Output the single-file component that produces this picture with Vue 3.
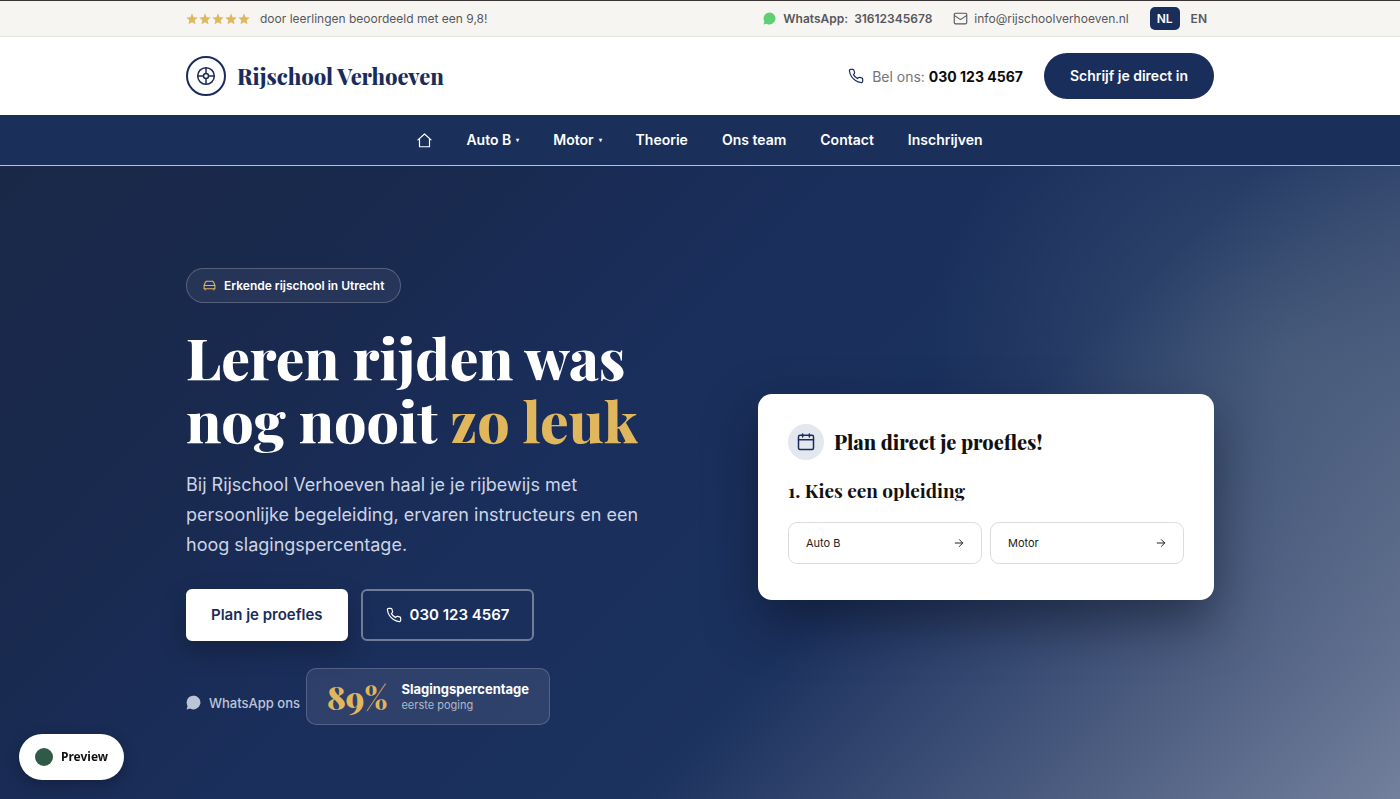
<script setup>
const stars = [0, 1, 2, 3, 4]
const links = [
  { label: 'Auto B', sub: true },
  { label: 'Motor', sub: true },
  { label: 'Theorie' },
  { label: 'Ons team' },
  { label: 'Contact' },
  { label: 'Inschrijven' }
]
const courses = ['Auto B', 'Motor']
</script>

<template>
  <div class="page">
    <div class="topbar">
      <div class="wrap topbar-row">
        <div class="rating">
          <span class="stars">
            <svg v-for="s in stars" :key="s" viewBox="0 0 24 24" width="12" height="12"><path fill="#e0b75c" d="M12 0.5l3.200 7.800 8.300.7-6.300 5.500 1.900 8.200L12 18.300 4.900 22.700l1.900-8.200L.5 9l8.300-.7z" /></svg>
          </span>
          <span>door leerlingen beoordeeld met een 9,8!</span>
        </div>
        <div class="contact">
          <a href="#whatsapp" class="wa"><svg viewBox="0 0 24 24" width="13" height="13"><path fill="#5fcf74" d="M12 1a11 11 0 1 1-5.500 20.500L1 23l1.500-5.500A11 11 0 0 1 12 1z" /></svg>WhatsApp:&nbsp; 31612345678</a>
          <a href="#mail" class="mail"><svg viewBox="0 0 24 24" width="15" height="15" fill="none" stroke="currentColor" stroke-width="1.800" stroke-linejoin="round"><rect x="2" y="3.500" width="20" height="17" rx="2" /><path d="M2 7l8.800 6a2.200 2.200 0 0 0 2.400 0L22 7" /></svg>info@rijschoolverhoeven.nl</a>
          <div class="langs">
            <button type="button" class="lang active">NL</button>
            <button type="button" class="lang">EN</button>
          </div>
        </div>
      </div>
    </div>

    <header class="header">
      <div class="wrap header-row">
        <a href="#home" class="brand">
          <span class="brand-mark">
            <svg viewBox="0 0 24 24" width="20" height="20" fill="none" stroke="currentColor" stroke-width="1.800"><circle cx="12" cy="12" r="10" /><circle cx="12" cy="12" r="3" /><path d="M12 2v7M12 15v7M2 12h7M15 12h7" /></svg>
          </span>
          Rijschool Verhoeven
        </a>
        <div class="header-actions">
          <a href="#bel" class="call">
            <svg viewBox="0 0 24 24" width="16" height="16" fill="none" stroke="#1a2c5b" stroke-width="1.800" stroke-linejoin="round"><path d="M22 16.900v3a2 2 0 0 1-2.200 2 19.800 19.800 0 0 1-8.600-3.100 19.500 19.500 0 0 1-6-6A19.800 19.800 0 0 1 2.100 4.200 2 2 0 0 1 4.100 2h3a2 2 0 0 1 2 1.700c.13 1 .36 1.900.7 2.800a2 2 0 0 1-.45 2.100L8.100 9.900a16 16 0 0 0 6 6l1.300-1.300a2 2 0 0 1 2.100-.45c.9.34 1.800.57 2.800.7a2 2 0 0 1 1.700 2z" /></svg>
            <span>Bel ons: <strong>030 123 4567</strong></span>
          </a>
          <button type="button" class="signup">Schrijf je direct in</button>
        </div>
      </div>
    </header>

    <nav class="nav" aria-label="Hoofdmenu">
      <a href="#home" class="home" aria-label="Home">
        <svg viewBox="0 0 24 24" width="15" height="15" fill="none" stroke="currentColor" stroke-width="1.900" stroke-linejoin="round" stroke-linecap="round"><path d="M1.500 11L12 1.500 22.500 11M4 9v13h16V9" /></svg>
      </a>
      <a v-for="l in links" :key="l.label" href="#menu">{{ l.label }}<span v-if="l.sub" class="caret">▾</span></a>
    </nav>

    <main class="hero">
      <div class="wrap hero-row">
        <section class="intro">
          <div class="badge">
            <svg viewBox="0 0 24 24" width="13" height="13" fill="none" stroke="#e0b75c" stroke-width="2" stroke-linejoin="round" stroke-linecap="round"><path d="M2 12l2.200-5.500A4 4 0 0 1 8 4h8a4 4 0 0 1 3.800 2.500L22 12v6H2zM2 12h20M4 18v2M20 18v2" /></svg>
            Erkende rijschool in Utrecht
          </div>
          <h1>Leren rijden was<br />nog nooit <em>zo leuk</em></h1>
          <p class="lead">Bij Rijschool Verhoeven haal je je rijbewijs met persoonlijke begeleiding, ervaren instructeurs en een hoog slagingspercentage.</p>
          <div class="ctas">
            <button type="button" class="cta primary">Plan je proefles</button>
            <a href="#bel" class="cta outline">
              <svg viewBox="0 0 24 24" width="16" height="16" fill="none" stroke="currentColor" stroke-width="1.800" stroke-linejoin="round"><path d="M22 16.900v3a2 2 0 0 1-2.200 2 19.800 19.800 0 0 1-8.600-3.100 19.500 19.500 0 0 1-6-6A19.800 19.800 0 0 1 2.100 4.200 2 2 0 0 1 4.100 2h3a2 2 0 0 1 2 1.700c.13 1 .36 1.900.7 2.800a2 2 0 0 1-.45 2.100L8.100 9.900a16 16 0 0 0 6 6l1.300-1.300a2 2 0 0 1 2.100-.45c.9.34 1.800.57 2.800.7a2 2 0 0 1 1.700 2z" /></svg>
              030 123 4567
            </a>
          </div>
          <div class="proof">
            <a href="#whatsapp" class="wa-light"><svg viewBox="0 0 24 24" width="15" height="15"><path fill="currentColor" d="M12 1a11 11 0 1 1-5.500 20.500L1 23l1.500-5.500A11 11 0 0 1 12 1z" /></svg>WhatsApp ons</a>
            <div class="score">
              <span class="pct">89%</span>
              <span class="score-text"><strong>Slagingspercentage</strong><small>eerste poging</small></span>
            </div>
          </div>
        </section>

        <section class="card">
          <div class="card-head">
            <span class="card-icon">
              <svg viewBox="0 0 24 24" width="18" height="18" fill="none" stroke="currentColor" stroke-width="2" stroke-linecap="round"><rect x="2" y="3" width="20" height="19" rx="2" /><path d="M2 9h20M7.500 1.200v4M16.500 1.200v4" /></svg>
            </span>
            <h2>Plan direct je proefles!</h2>
          </div>
          <h3>1. Kies een opleiding</h3>
          <div class="options">
            <button v-for="c in courses" :key="c" type="button" class="option">
              {{ c }}
              <svg viewBox="0 0 24 24" width="10" height="10" fill="none" stroke="currentColor" stroke-width="2.400" stroke-linecap="round" stroke-linejoin="round"><path d="M3 12h18M13 4l8 8-8 8" /></svg>
            </button>
          </div>
        </section>
      </div>
    </main>

    <button type="button" class="preview"><span class="dot"></span>Preview</button>
  </div>
</template>

<style>
body {
  background: #fff;
}
</style>

<style scoped>
* {
  box-sizing: border-box;
}
.page {
  display: flex;
  flex-direction: column;
  min-height: 100vh;
  font-family: Inter, "Liberation Sans", sans-serif;
  color: #111;
}
a {
  color: inherit;
  text-decoration: none;
}
button {
  font: inherit;
  border: 0;
  cursor: pointer;
}
svg {
  flex: none;
  display: block;
}
.wrap {
  width: calc(100% - 48px);
  max-width: 1028px;
  margin: 0 auto;
}
.topbar {
  background: #f7f5f2;
  border-top: 1px solid #3a3435;
  border-bottom: 1px solid #e6e4e0;
  font-size: 12px;
  line-height: 20px;
  color: #56575c;
}
.topbar-row {
  display: flex;
  justify-content: space-between;
  align-items: center;
  height: 35px;
}
.rating,
.contact,
.wa,
.mail,
.langs,
.stars {
  display: flex;
  align-items: center;
}
.rating {
  gap: 10px;
}
.stars {
  gap: 1px;
}
.contact {
  gap: 21px;
}
.wa {
  gap: 7px;
  font-weight: 600;
}
.mail {
  gap: 6px;
}
.langs {
  gap: 4px;
}
.lang {
  background: none;
  color: #56575c;
  font-weight: 600;
  font-size: 12px;
  line-height: 15px;
  padding: 4px 7px;
  border-radius: 5px;
}
.lang.active {
  background: #1a2e5b;
  color: #fff;
}
.header {
  background: #fff;
}
.header-row {
  display: flex;
  justify-content: space-between;
  align-items: center;
  padding: 16px 0;
}
.brand {
  display: flex;
  align-items: center;
  gap: 11px;
  color: #1a2c5b;
  font: 800 22px/32px "Playfair Display", "Liberation Serif", serif;
}
.brand-mark {
  display: grid;
  place-items: center;
  width: 40px;
  height: 40px;
  border: 2px solid #1a2c5b;
  border-radius: 50%;
}
.header-actions {
  display: flex;
  align-items: center;
  gap: 21px;
}
.call {
  display: flex;
  align-items: center;
  gap: 8px;
  font-size: 14px;
  color: #75757a;
}
.call strong {
  color: #0c0c0f;
  font-weight: 700;
}
.signup {
  background: #1a2e5b;
  color: #fff;
  font-weight: 600;
  font-size: 14px;
  line-height: 22px;
  padding: 12px 26px;
  border-radius: 24px;
}
.nav {
  display: flex;
  justify-content: center;
  align-items: center;
  gap: 34px;
  height: 51px;
  background: #1a2f5a;
  border-bottom: 1px solid #b9c2d0;
  color: #fff;
  font-size: 14px;
  line-height: 20px;
  font-weight: 600;
}
.nav a {
  display: flex;
  align-items: center;
}
.caret {
  margin-left: 5px;
  font-size: 6px;
}
.hero {
  flex: 1;
  padding: 102px 0 74px;
  background:
    radial-gradient(ellipse 360px 320px at 92% 30%, rgba(125, 145, 155, 0.26), rgba(125, 145, 155, 0.14) 50%, rgba(125, 145, 155, 0) 100%),
    linear-gradient(135deg, #192847 0%, #192a50 25%, #1a2e5b 40%, #1b315e 62%, #73809c 100%);
}
.hero-row {
  display: grid;
  grid-template-columns: minmax(0, 1fr) minmax(0, 1fr);
  gap: 116px;
  align-items: center;
}
.badge {
  display: flex;
  width: fit-content;
  align-items: center;
  gap: 8px;
  padding: 6px 16px;
  border: 1px solid rgba(255, 255, 255, 0.22);
  border-radius: 18px;
  background: rgba(255, 255, 255, 0.06);
  color: #fff;
  font-size: 12px;
  line-height: 21px;
  font-weight: 600;
}
h1,
h2,
h3,
p {
  margin: 0;
}
h1 {
  margin-top: 22px;
  white-space: nowrap;
  color: #fff;
  font: 800 57px/63px "Playfair Display", "Liberation Serif", serif;
}
h1 em {
  font-style: normal;
  color: #e0b75c;
}
.lead {
  margin-top: 19px;
  font-size: 18px;
  line-height: 30px;
  color: #ccd5e6;
}
.ctas {
  display: flex;
  gap: 13px;
  margin-top: 29px;
}
.cta {
  display: flex;
  align-items: center;
  gap: 8px;
  padding: 12px 23px;
  border: 2px solid transparent;
  border-radius: 6px;
  font-size: 15px;
  line-height: 24px;
  font-weight: 600;
}
.primary {
  background: #fff;
  border-color: #fff;
  color: #1a2c5b;
  box-shadow: 0 10px 24px rgba(0, 0, 0, 0.25);
}
.outline {
  border-color: rgba(255, 255, 255, 0.38);
  color: #fff;
}
.proof {
  display: flex;
  align-items: center;
  gap: 6px;
  margin-top: 27px;
}
.wa-light {
  display: flex;
  align-items: center;
  gap: 8px;
  margin-top: 12px;
  color: #bcc5d8;
  font-size: 13px;
  font-weight: 500;
}
.score {
  display: flex;
  align-items: center;
  gap: 14px;
  padding: 8px 20px;
  border: 1px solid rgba(255, 255, 255, 0.18);
  border-radius: 10px;
  background: rgba(255, 255, 255, 0.09);
}
.pct {
  color: #e0b75c;
  font: 900 32px/39px "Playfair Display", "Liberation Serif", serif;
}
.score-text {
  display: flex;
  flex-direction: column;
}
.score-text strong {
  color: #fff;
  font-size: 13px;
  line-height: 17px;
  font-weight: 700;
}
.score-text small {
  color: #aeb8cb;
  font-size: 11px;
  line-height: 15px;
}
.card {
  padding: 30px 30px 36px;
  border-radius: 14px;
  background: #fff;
  box-shadow: 0 22px 50px rgba(10, 16, 32, 0.5);
}
.card-head {
  display: flex;
  align-items: center;
  gap: 10px;
}
.card-icon {
  display: grid;
  place-items: center;
  width: 36px;
  height: 36px;
  border-radius: 50%;
  background: #e3e7ee;
  color: #1a2c5b;
}
h2 {
  font: 800 20px/30px "Playfair Display", "Liberation Serif", serif;
}
h3 {
  margin-top: 15px;
  font: 700 19px/30px "Playfair Display", "Liberation Serif", serif;
}
.options {
  display: grid;
  grid-template-columns: 1fr 1fr;
  gap: 8px;
  margin-top: 17px;
}
.option {
  display: flex;
  justify-content: space-between;
  align-items: center;
  padding: 12px 17px;
  border: 1px solid #dddcd9;
  border-radius: 9px;
  background: #fff;
  color: #222;
  font-size: 11px;
  line-height: 16px;
}
.preview {
  position: fixed;
  left: 19px;
  bottom: 19px;
  display: flex;
  align-items: center;
  gap: 8px;
  padding: 12px 16px;
  border-radius: 24px;
  background: #fff;
  color: #111;
  font: 700 12px/22px "Noto Sans", "Open Sans", sans-serif;
  box-shadow: 0 4px 14px rgba(0, 0, 0, 0.25);
}
.dot {
  width: 18px;
  height: 18px;
  border-radius: 50%;
  background: #2e5a47;
}
</style>
